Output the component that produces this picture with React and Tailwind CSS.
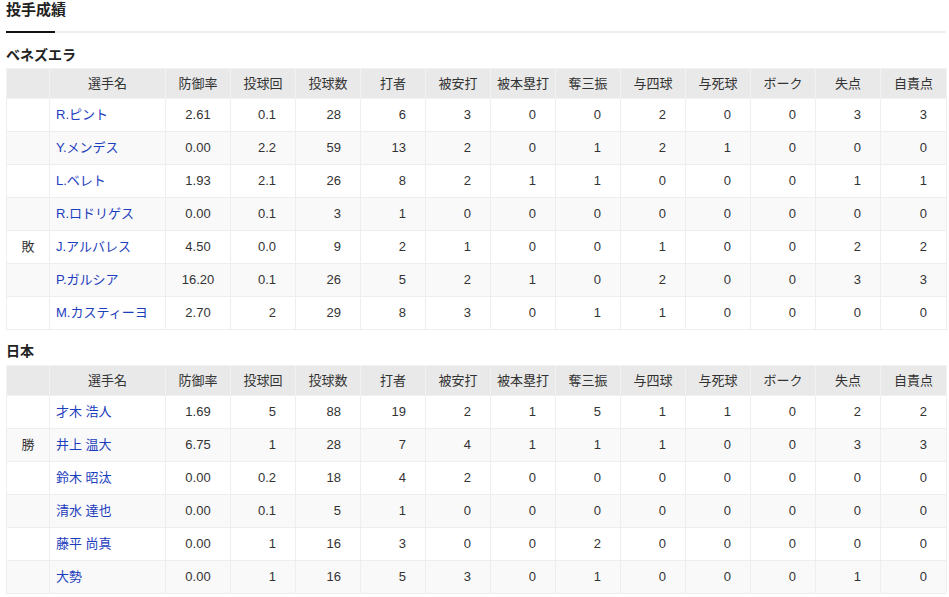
import React from "react";

const headers = ["選手名","防御率","投球回","投球数","打者","被安打","被本塁打","奪三振","与四球","与死球","ボーク","失点","自責点"];

const ven = [
  ["", "R.ピント", "2.61", "0.1", 28, 6, 3, 0, 0, 2, 0, 0, 3, 3],
  ["", "Y.メンデス", "0.00", "2.2", 59, 13, 2, 0, 1, 2, 1, 0, 0, 0],
  ["", "L.ベレト", "1.93", "2.1", 26, 8, 2, 1, 1, 0, 0, 0, 1, 1],
  ["", "R.ロドリゲス", "0.00", "0.1", 3, 1, 0, 0, 0, 0, 0, 0, 0, 0],
  ["敗", "J.アルバレス", "4.50", "0.0", 9, 2, 1, 0, 0, 1, 0, 0, 2, 2],
  ["", "P.ガルシア", "16.20", "0.1", 26, 5, 2, 1, 0, 2, 0, 0, 3, 3],
  ["", "M.カスティーヨ", "2.70", "2", 29, 8, 3, 0, 1, 1, 0, 0, 0, 0],
];

const jpn = [
  ["", "才木 浩人", "1.69", "5", 88, 19, 2, 1, 5, 1, 1, 0, 2, 2],
  ["勝", "井上 温大", "6.75", "1", 28, 7, 4, 1, 1, 1, 0, 0, 3, 3],
  ["", "鈴木 昭汰", "0.00", "0.2", 18, 4, 2, 0, 0, 0, 0, 0, 0, 0],
  ["", "清水 達也", "0.00", "0.1", 5, 1, 0, 0, 0, 0, 0, 0, 0, 0],
  ["", "藤平 尚真", "0.00", "1", 16, 3, 0, 0, 2, 0, 0, 0, 0, 0],
  ["", "大勢", "0.00", "1", 16, 5, 3, 0, 1, 0, 0, 0, 1, 0],
];

function StatTable({ rows }) {
  return (
    <table className="border-collapse table-fixed w-[940px] border border-[#dddddd] text-[13px] text-[#333333]">
      <colgroup>
        <col className="w-[43px]" />
        <col className="w-[116px]" />
        {Array.from({ length: 11 }).map((_, i) => (
          <col key={i} className="w-[65px]" />
        ))}
        <col className="w-[66px]" />
      </colgroup>
      <thead>
        <tr className="bg-[#e9e9e9] h-[30px]">
          <th className="border border-[#f2f2f2] font-normal p-0"></th>
          {headers.map((h) => (
            <th key={h} className="border border-[#f2f2f2] font-normal p-0 text-center">{h}</th>
          ))}
        </tr>
      </thead>
      <tbody>
        {rows.map((r, i) => (
          <tr key={i} className={`h-[33px] ${i % 2 === 1 ? "bg-[#f9f9f9]" : "bg-white"}`}>
            <td className="border border-[#eeeeee] text-center p-0">{r[0]}</td>
            <td className="border border-[#eeeeee] pl-[6px] p-0 text-[#1c3dbd] whitespace-nowrap">{r[1]}</td>
            <td className="border border-[#eeeeee] text-center p-0">{r[2]}</td>
            {r.slice(3).map((v, j) => (
              <td key={j} className="border border-[#eeeeee] text-right pr-[19px] p-0">{v}</td>
            ))}
          </tr>
        ))}
      </tbody>
    </table>
  );
}

export default function App() {
  return (
    <div
      className="bg-white w-[949px] h-[597px] overflow-hidden pl-[6px] text-[#333333]"
      style={{ fontFamily: '"Liberation Sans", "Noto Sans CJK JP", sans-serif' }}
    >
      <div className="w-[940px]">
        <div className="h-[31px] text-[15px] leading-[20px] font-bold text-[#222222]">投手成績</div>
        <div className="h-[2px] bg-[#efefef] flex">
          <div className="w-[49px] h-[2px] bg-[#111111]"></div>
        </div>
        <div className="mt-[12px] h-[20px] leading-[20px] text-[14px] font-bold mb-[3px] text-[#222222]">ベネズエラ</div>
        <StatTable rows={ven} />
        <div className="mt-[11px] h-[20px] leading-[20px] text-[14px] font-bold mb-[4px] text-[#222222]">日本</div>
        <StatTable rows={jpn} />
      </div>
    </div>
  );
}
